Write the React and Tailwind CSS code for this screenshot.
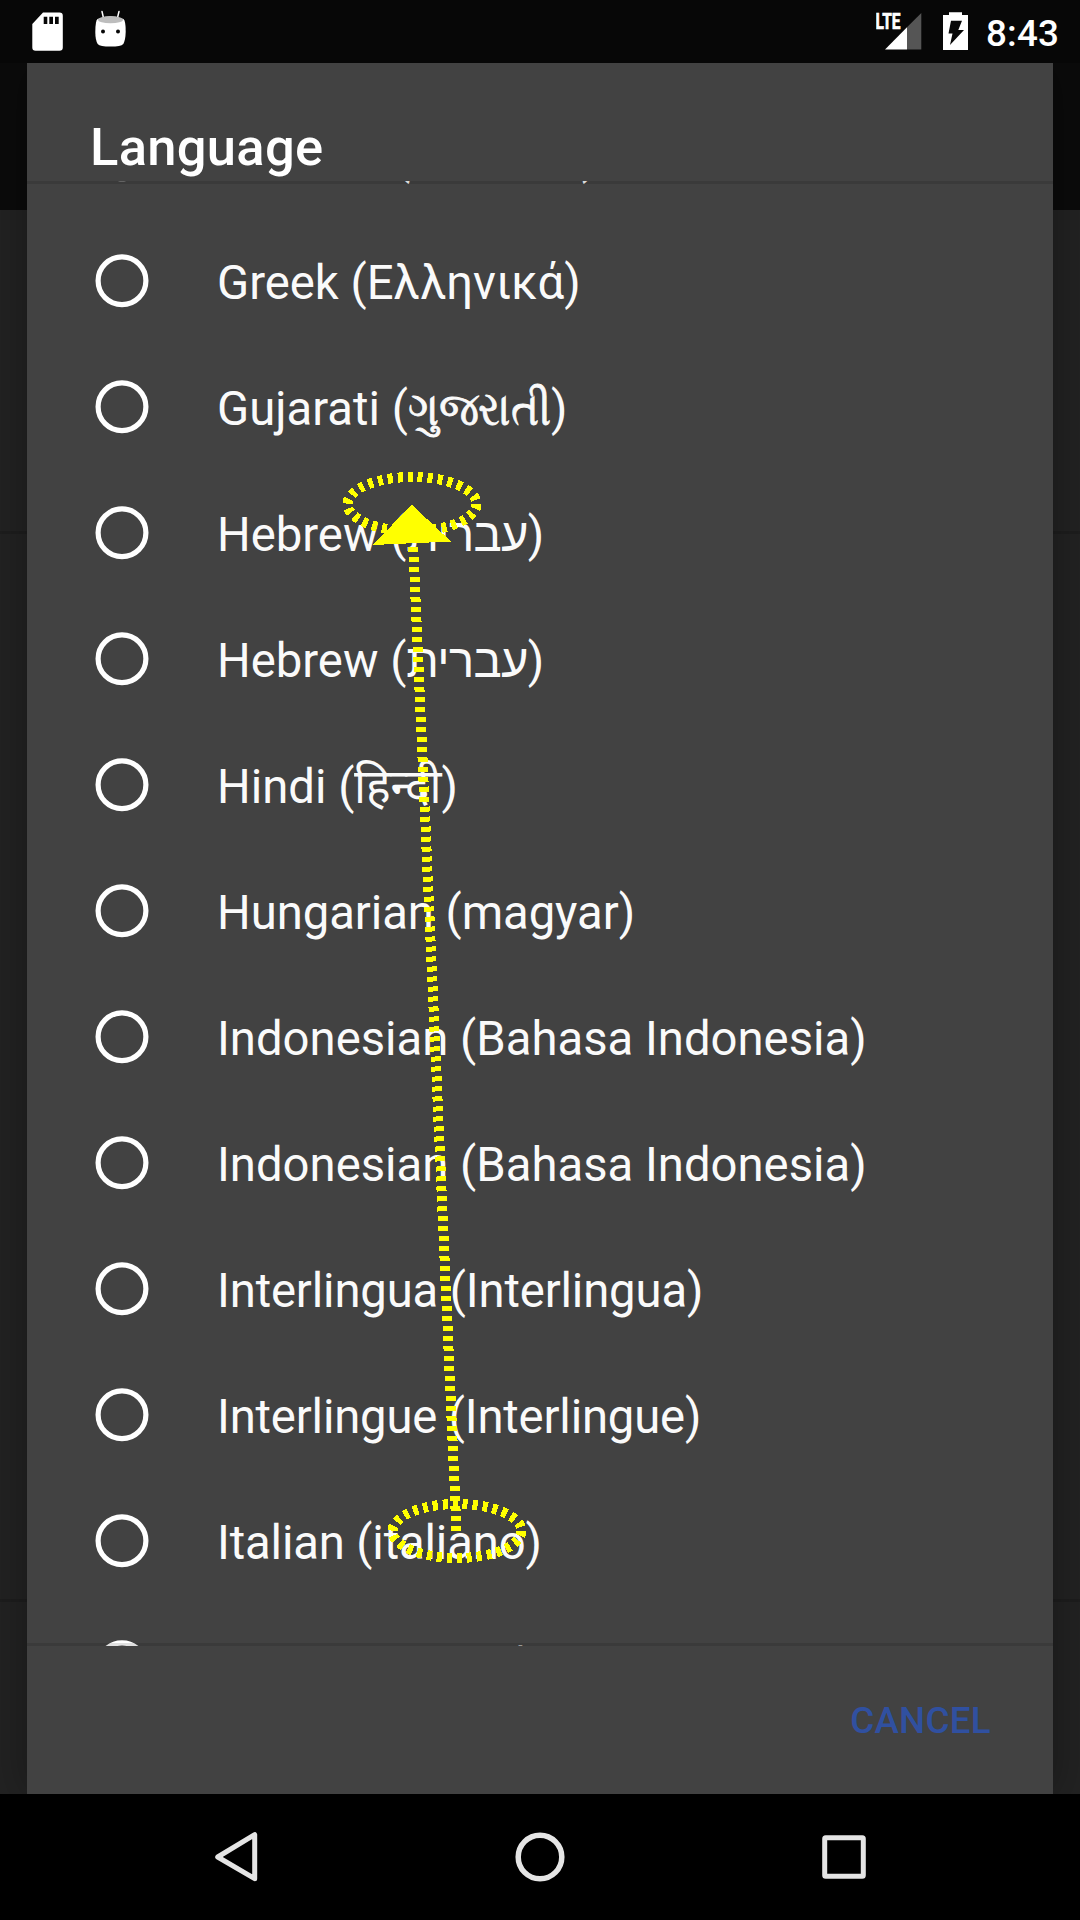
const languages = [
  { name: "German", native: "Deutsch", tracking: "tracking-[-0.15px]" },
  { name: "Greek", native: "Ελληνικά" },
  {
    name: "Gujarati",
    native: "ગુજરાતી",
    nativeClass: "inline-block origin-left scale-x-[0.9] -mr-[15px] [-webkit-text-stroke:0.8px_#fafafa]",
  },
  { name: "Hebrew", native: "עברית", nativeClass: "tracking-[-0.7px]" },
  { name: "Hebrew", native: "עברית", nativeClass: "tracking-[-0.7px]" },
  { name: "Hindi", native: "हिन्दी", nativeClass: "inline-block origin-left scale-x-[0.98] -mr-[2px]" },
  { name: "Hungarian", native: "magyar", tracking: "tracking-[-0.06px]" },
  { name: "Indonesian", native: "Bahasa Indonesia" },
  { name: "Indonesian", native: "Bahasa Indonesia" },
  { name: "Interlingua", native: "Interlingua", tracking: "tracking-[-0.15px]" },
  { name: "Interlingue", native: "Interlingue", tracking: "tracking-[-0.18px]" },
  { name: "Italian", native: "italiano", tracking: "tracking-[-0.15px]" },
  { name: "Japanese", native: "日本語", nativeClass: "relative top-[1px]" },
];

function StatusBar() {
  return (
    <header className="flex h-[63px] shrink-0 items-center bg-[#070707] pl-8 pr-[21px] text-white">
      <svg className="h-[63px] w-8" viewBox="32 0 32 63" fill="#fff">
        <path fillRule="evenodd" d="M43 12.500H59.500a3.300 3.300 0 0 1 3.300 3.300V47.500a3.300 3.300 0 0 1-3.300 3.300H35.600a3.300 3.300 0 0 1-3.300-3.300V24ZM43.700 16.700V24h3.600v-7.300ZM49.300 16.700V24H53v-7.300ZM55 16.700V24h3.700v-7.300Z" />
      </svg>
      <svg className="ml-[30px] h-[63px] w-8" viewBox="94 0 32 63">
        <path d="M102 11.500l1.600 7M119 11.500l-1.700 7" stroke="#fff" strokeWidth="1.500" strokeLinecap="round" />
        <path d="M97.500 19Q110 14 123.500 19Q125.800 21 125.700 32Q125.500 40 123.300 44Q121 46.600 110.500 46.600Q100 46.600 97.700 44Q95.300 40 95.300 32Q95.300 21 97.500 19Z" fill="#fff" />
        <ellipse cx="110.500" cy="19.700" rx="12.500" ry="3.600" fill="#bdbdbd" />
        <circle cx="103" cy="31.500" r="2" fill="#070707" />
        <circle cx="118" cy="31.500" r="2" fill="#070707" />
      </svg>
      <div className="flex-1" />
      <svg className="h-[63px] w-[46px]" viewBox="876 0 46 63">
        <path d="M921.300 13V49.500H907V27.300Z" fill="#555" />
        <path d="M907 27.300V49.500H885Z" fill="#fff" />
        <text x="875.500" y="29.300" textLength="25" lengthAdjust="spacingAndGlyphs" fontFamily="Roboto" fontWeight="700" fontSize="22.500" fill="#fff" stroke="#fff" strokeWidth="0.700">LTE</text>
      </svg>
      <svg className="ml-[21px] h-[63px] w-[25px]" viewBox="943 0 25 63">
        <path d="M949 12.300h13v2.700h6V50h-25V15h6Z" fill="#fff" />
        <path d="M951 20.800h11l-3.700 9.200h5.700L950 45l2.500-11.500h-4Z" fill="#070707" />
      </svg>
      <span className="ml-[18px] w-[73px] whitespace-nowrap text-[36.750px] font-medium leading-[63px] tracking-[0.2px]">
        <span className="relative top-[1.500px]">8:43</span>
      </span>
    </header>
  );
}

function LanguageRow({ name, native, tracking = "", nativeClass = "" }) {
  return (
    <li className="flex h-[126px] shrink-0 items-center pl-[68px]">
      <svg className="h-[54px] w-[54px] shrink-0" viewBox="0 0 54 54" fill="none" stroke="#fff" strokeWidth="5.200">
        <circle cx="27" cy="26.800" r="23.900" />
      </svg>
      <span className={`ml-[68px] whitespace-nowrap pt-[3px] text-[47.250px] leading-[56px] text-[#fafafa] ${tracking}`}>
        {name} (<span className={nativeClass}>{native}</span>)
      </span>
    </li>
  );
}

function LanguageDialog() {
  return (
    <section className="z-10 flex w-[1026px] flex-col bg-[#424242] shadow-[0_0_40px_rgba(0,0,0,0.3)]">
      <h1 className="h-[118px] pl-[63px] pt-[53px] text-[52.500px] font-medium leading-[62px] tracking-[0.3px] text-white">Language</h1>
      <div className="grid h-[1465px] overflow-hidden">
        <ul className="col-start-1 row-start-1 -mt-[89px] flex flex-col">
          {languages.map((language, i) => (
            <LanguageRow key={i} {...language} />
          ))}
        </ul>
        <div className="pointer-events-none z-10 col-start-1 row-start-1 h-[1465px] border-y-[3px] border-black/[0.12]" />
      </div>
      <footer className="flex flex-1 items-center justify-end pr-[62px]">
        <button className="relative top-[1px] text-[36.750px] font-medium tracking-[0.300px] text-[#3050a0]">CANCEL</button>
      </footer>
    </section>
  );
}

function NavigationBar() {
  return (
    <nav className="flex h-[126px] shrink-0 items-center bg-black pl-[210px]">
      <svg className="h-[126px] w-[52px]" viewBox="210 1794 52 126" fill="none" stroke="#e5e5e5" strokeWidth="5" strokeLinejoin="round">
        <path d="M254.700 1834.700V1878.700L217.700 1857Z" />
      </svg>
      <svg className="ml-[248px] h-[126px] w-[60px]" viewBox="510 1794 60 126" fill="none" stroke="#e5e5e5" strokeWidth="5.500">
        <circle cx="540" cy="1857" r="21.800" />
      </svg>
      <svg className="ml-[244px] h-[126px] w-[60px]" viewBox="814 1794 60 126" fill="none" stroke="#e5e5e5" strokeWidth="5">
        <rect x="824.700" y="1837.700" width="38.600" height="38.600" rx="1" />
      </svg>
    </nav>
  );
}

/* Swipe gesture drawn over the screen, from its start point up to its end. */
function SwipeOverlay() {
  return (
    <svg className="pointer-events-none absolute left-0 top-0 z-20 h-[1920px] w-[1080px]" viewBox="0 0 1080 1920" fill="none" stroke="#ff0" strokeWidth="10" shapeRendering="crispEdges">
      <g strokeDasharray="5 5">
        <ellipse cx="412" cy="504" rx="64.500" ry="27" />
        <ellipse cx="457" cy="1531" rx="64.500" ry="27" />
        <path d="M456.500 1531L412.500 530" />
      </g>
      <path d="M411.500 504.500L373 545L451 541.500Z" fill="#ff0" stroke="none" />
    </svg>
  );
}

export default function App() {
  return (
    <div className="relative flex h-[1920px] w-[1080px] flex-col overflow-hidden bg-[#222] font-['Roboto','Noto_Sans','Noto_Sans_CJK_JP',sans-serif]">
      <StatusBar />
      <main className="grid h-[1731px] shrink-0 overflow-hidden">
        <div className="col-start-1 row-start-1 flex flex-col">
          <div className="h-[147px] bg-[#0b0b0b]" />
          <div className="h-[324px] border-b-[3px] border-[#1d1d1d]" />
          <div className="h-[1068px] border-b-[3px] border-[#1d1d1d]" />
        </div>
        <div className="col-start-1 row-start-1 flex justify-center">
          <LanguageDialog />
        </div>
      </main>
      <NavigationBar />
      <SwipeOverlay />
    </div>
  );
}
